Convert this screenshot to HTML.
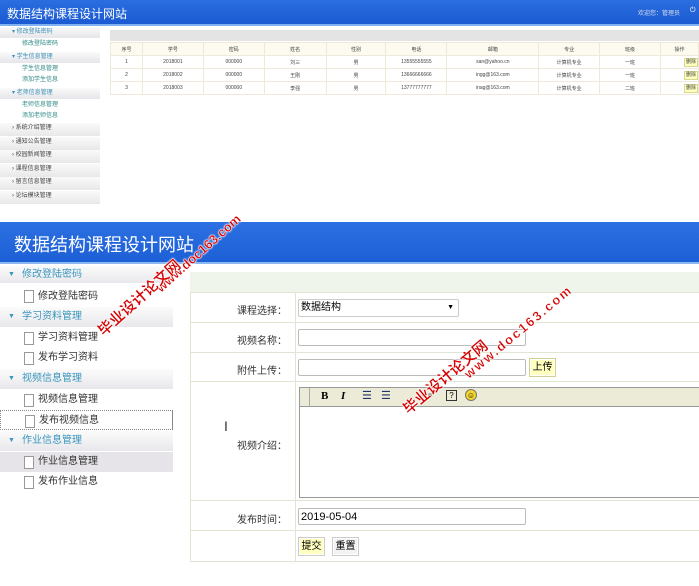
<!DOCTYPE html>
<html><head><meta charset="utf-8"><style>
*{margin:0;padding:0;box-sizing:border-box}
body{width:699px;height:586px;overflow:hidden;background:#fff;font-family:"Liberation Sans","Noto Sans CJK SC",sans-serif;position:relative}
.a{position:absolute}
.hd1{left:0;top:0;width:699px;height:26px;background:linear-gradient(#2a6ee0,#1b5ad2);border-bottom:2px solid #7fb0f0}
.sb1 div{position:absolute;left:0;width:100px;font-size:6px;line-height:11px;padding-left:12px}
.h1{background:linear-gradient(#fafafa,#e6e6ea);color:#3d8fb8}
.c1{color:#444;background:linear-gradient(#fafafa,#e8e8ea)}
.s1{color:#2f8a86;padding-left:22px!important}
table.t{border-collapse:collapse;font-size:5px;color:#444;position:absolute;left:110px;top:42px}
table.t td{border:1px solid #eee9d8;height:13px;text-align:center}
table.t tr:first-child td{background:#fdfaf0}
.del{display:inline-block;background:#ffffc0;border:1px solid #d8d890;padding:0 1px;line-height:7px}
.hd2{left:0;top:222px;width:699px;height:42px;background:linear-gradient(#2c70e2,#1d5fd6);border-bottom:2px solid #8ab8f0}
.sb2 div{position:absolute;left:0;width:173px;font-size:10px;padding-left:22px}
.h2{background:linear-gradient(#fbfbfb,#e8e8ec);color:#3a95bd}
.s2{color:#333;padding-left:38px!important;background:#fff}
.s2:before{content:"";position:absolute;left:24px;top:4px;width:8px;height:11px;border:1px solid #999;background:#fff}
.tri{position:absolute;left:8px;font-size:7px;color:#3a95bd}
.fr{position:absolute;left:190px;width:509px;border-bottom:1px solid #dfe6d4}
.lb{position:absolute;left:190px;width:105px;text-align:right;font-size:10px;color:#333;padding-right:8px}
.inp{position:absolute;border:1px solid #bbb;border-radius:2px;background:#fff;font-size:10px;padding-left:2px;line-height:16px}
.btn{position:absolute;font-size:10px;line-height:17px;text-align:center;border:1px solid #ccc;box-shadow:inset 0 0 0 1px #fff}
.wm{position:absolute;color:#d60000;font-weight:bold;-webkit-text-stroke:0.3px #fff;text-shadow:0 0 2px #fff,0 0 2px #fff;transform-origin:left center;white-space:nowrap}
</style></head><body>
<div class="a hd1"></div>
<div class="a" style="left:7px;top:5px;font-size:12px;color:#fff">数据结构课程设计网站</div>
<div class="a" style="left:638px;top:8px;font-size:6px;color:#dde">欢迎您：管理员</div>
<div class="a" style="left:690px;top:7px;font-size:7px;color:#fff">⏻</div>
<div class="sb1">
<div class="h1" style="top:27px">▾ 修改登陆密码</div>
<div class="s1" style="top:39px;background:#fff">修改登陆密码</div>
<div class="h1" style="top:52px">▾ 学生信息管理</div>
<div class="s1" style="top:64px;background:#fff">学生信息管理</div>
<div class="s1" style="top:75px;background:#fff">添加学生信息</div>
<div class="h1" style="top:88px">▾ 老师信息管理</div>
<div class="s1" style="top:100px;background:#fff">老师信息管理</div>
<div class="s1" style="top:111px;background:#fff">添加老师信息</div>
<div class="c1" style="top:123px;height:13px">› 系统介绍管理</div>
<div class="c1" style="top:137px;height:13px">› 通知公告管理</div>
<div class="c1" style="top:150px;height:13px">› 校园新闻管理</div>
<div class="c1" style="top:164px;height:13px">› 课程信息管理</div>
<div class="c1" style="top:177px;height:13px">› 留言信息管理</div>
<div class="c1" style="top:191px;height:13px">› 论坛模块管理</div>
</div>
<div class="a" style="left:110px;top:30px;width:589px;height:11px;background:#e4e4e4"></div>
<table class="t">
<tr><td style="width:32px">序号</td><td style="width:61px">学号</td><td style="width:61px">密码</td><td style="width:62px">姓名</td><td style="width:60px">性别</td><td style="width:61px">电话</td><td style="width:92px">邮箱</td><td style="width:61px">专业</td><td style="width:61px">班级</td><td style="width:38px">操作</td></tr>
<tr><td>1</td><td>2018001</td><td>000000</td><td>刘三</td><td>男</td><td>13555555555</td><td>san@yahoo.cn</td><td>计算机专业</td><td>一班</td><td style="text-align:right"><span class="del">删除</span></td></tr>
<tr><td>2</td><td>2018002</td><td>000000</td><td>王刚</td><td>男</td><td>13666666666</td><td>ingg@163.com</td><td>计算机专业</td><td>一班</td><td style="text-align:right"><span class="del">删除</span></td></tr>
<tr><td>3</td><td>2018003</td><td>000000</td><td>李强</td><td>男</td><td>13777777777</td><td>inag@163.com</td><td>计算机专业</td><td>二班</td><td style="text-align:right"><span class="del">删除</span></td></tr>
</table>

<div class="a hd2"></div>
<div class="a" style="left:14px;top:231px;font-size:18px;color:#fff">数据结构课程设计网站</div>
<div class="sb2">
<div class="h2" style="top:266px;height:17px;line-height:17px"><span class="tri">▼</span>修改登陆密码</div>
<div class="s2" style="top:286px;height:21px;line-height:21px">修改登陆密码</div>
<div class="h2" style="top:307px;height:20px;line-height:20px"><span class="tri">▼</span>学习资料管理</div>
<div class="s2" style="top:328px;height:20px;line-height:20px">学习资料管理</div>
<div class="s2" style="top:348px;height:20px;line-height:20px">发布学习资料</div>
<div class="h2" style="top:369px;height:20px;line-height:20px"><span class="tri">▼</span>视频信息管理</div>
<div class="s2" style="top:390px;height:20px;line-height:20px">视频信息管理</div>
<div class="s2" style="top:410px;height:20px;line-height:20px;border:1px dotted #888;border-right:1px solid #888">发布视频信息</div>
<div class="h2" style="top:431px;height:20px;line-height:20px"><span class="tri">▼</span>作业信息管理</div>
<div class="s2" style="top:452px;height:20px;line-height:20px;background:#e6e4e8">作业信息管理</div>
<div class="s2" style="top:472px;height:20px;line-height:20px">发布作业信息</div>
</div>

<div class="a" style="left:190px;top:272px;width:509px;height:290px;border:1px solid #dfe6d4;border-right:none"></div>
<div class="a" style="left:190px;top:272px;width:509px;height:21px;background:#f0f5ec;border-bottom:1px solid #dfe6d4"></div>
<div class="a" style="left:295px;top:293px;width:1px;height:269px;background:#dfe6d4"></div>
<div class="fr" style="top:293px;height:30px"></div>
<div class="fr" style="top:323px;height:30px"></div>
<div class="fr" style="top:353px;height:29px"></div>
<div class="fr" style="top:382px;height:119px"></div>
<div class="fr" style="top:501px;height:30px"></div>
<div class="lb" style="top:302px">课程选择：</div>
<div class="lb" style="top:332px">视频名称：</div>
<div class="lb" style="top:362px">附件上传：</div>
<div class="lb" style="top:437px">视频介绍：</div>
<div class="lb" style="top:511px">发布时间：</div>
<div class="a" style="left:224px;top:418px;font-size:14px;color:#333">I</div>
<div class="inp" style="left:298px;top:299px;width:161px;height:18px;border-color:#ccc">数据结构<span style="position:absolute;right:4px;font-size:7px">▼</span></div>
<div class="inp" style="left:298px;top:329px;width:228px;height:17px"></div>
<div class="inp" style="left:298px;top:359px;width:228px;height:17px"></div>
<div class="btn" style="left:529px;top:358px;width:27px;height:19px;background:#ffffc0;border-color:#d0d090">上传</div>
<div class="a" style="left:299px;top:387px;width:400px;height:111px;border:1px solid #999;border-right:none"></div>
<div class="a" style="left:300px;top:388px;width:399px;height:19px;background:#ecebd8;border-bottom:1px solid #999"></div>
<div class="a" style="left:300px;top:388px;width:10px;height:19px;border-right:1px solid #aaa"></div>
<div class="a" style="left:321px;top:390px;font-size:11px;font-weight:bold;font-family:'Liberation Serif',serif">B</div>
<div class="a" style="left:341px;top:390px;font-size:11px;font-weight:bold;font-style:italic;font-family:'Liberation Serif',serif">I</div>
<div class="a" style="left:362px;top:389px;font-size:11px;color:#236">☰</div>
<div class="a" style="left:381px;top:389px;font-size:11px;color:#236">☰</div>
<div class="a" style="left:421px;top:390px;font-size:10px;color:#999">●●</div>
<div class="a" style="left:446px;top:390px;width:11px;height:11px;border:1px solid #333;font-size:8px;text-align:center;line-height:9px">?</div>
<div class="a" style="left:465px;top:389px;width:12px;height:12px;border-radius:50%;background:#f5d630;border:1px solid #776;font-size:8px;text-align:center;line-height:11px">☺</div>
<div class="inp" style="left:298px;top:508px;width:228px;height:17px;font-size:11px">2019-05-04</div>
<div class="btn" style="left:298px;top:537px;width:27px;height:19px;background:#ffffc0">提交</div>
<div class="btn" style="left:332px;top:537px;width:27px;height:19px;background:#f3f3f3">重置</div>

<div class="wm" style="left:158px;top:282px;font-size:13px;transform:rotate(-42deg)">www.doc163.com</div>
<div class="wm" style="left:100px;top:322px;font-size:15px;transform:rotate(-42deg)">毕业设计论文网</div>
<div class="wm" style="left:466px;top:368px;font-size:13px;letter-spacing:2px;transform:rotate(-40deg)">www.doc163.com</div>
<div class="wm" style="left:405px;top:400px;font-size:15px;transform:rotate(-40deg)">毕业设计论文网</div>
</body></html>
